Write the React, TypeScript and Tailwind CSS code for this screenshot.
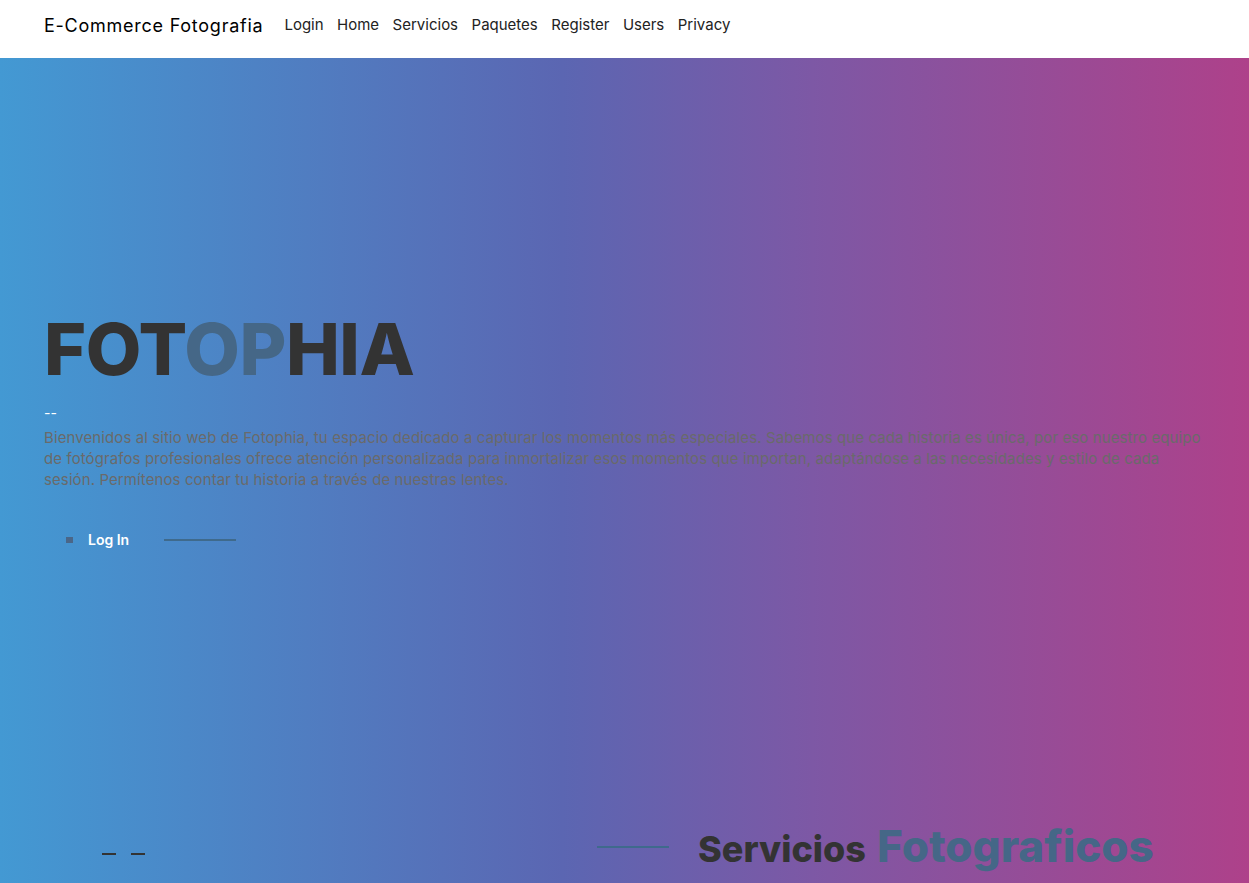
const navLinks = ['Login', 'Home', 'Servicios', 'Paquetes', 'Register', 'Users', 'Privacy'];

const font = { fontFamily: 'Inter, "Open Sans", "Liberation Sans", sans-serif' };

export default function App() {
  return (
    <div style={font} className="min-h-screen bg-white">
      <nav className="flex h-[58px] items-start bg-white px-[44px] pt-[12px]">
        <a className="mr-[21px] text-[18px] tracking-[0.75px] text-black">E-Commerce Fotografia</a>
        <ul className="mt-[2px] flex gap-[13.5px]">
          {navLinks.map((l) => (
            <li key={l} className="text-[15px] text-[#222]">
              {l}
            </li>
          ))}
        </ul>
      </nav>

      <section className="h-[825px] overflow-hidden bg-[linear-gradient(to_right,#4399d3_0%,#5b66b2_45%,#7d58a5_65%,#ae418a_100%)]">
        <div className="px-[44px] pt-[252px]">
          <h1 className="text-[72px] leading-[78px] font-extrabold tracking-[-0.5px] text-[#333]">
            FOT<span className="text-[#456787]">OP</span>HIA
          </h1>
          <div className="mt-[18px] text-[14px] leading-[14px] text-white">--</div>
          <p className="mt-[7px] max-w-[1180px] text-[15px] leading-[21px] tracking-[0.1px] text-[#6a6a6a]">
            Bienvenidos al sitio web de Fotophia, tu espacio dedicado a capturar los momentos más especiales.
            Sabemos que cada historia es única, por eso nuestro equipo de fotógrafos profesionales ofrece atención
            personalizada para inmortalizar esos momentos que importan, adaptándose a las necesidades y estilo de
            cada
            <br />
            sesión. Permítenos contar tu historia a través de nuestras lentes.
          </p>
          <div className="mt-[39px] flex items-center">
            <span className="ml-[22px] h-[6px] w-[7px] bg-[#4a6688]" />
            <span className="ml-[15px] text-[14px] font-semibold text-white">Log In</span>
            <span className="ml-[35px] h-[2px] w-[72px] bg-[#3f6a8c]" />
          </div>
        </div>

        <div className="mt-[263px] flex items-center">
          <div className="mt-[16px] ml-[102px] flex gap-[15px]">
            <span className="h-[2px] w-[14px] bg-[#333]" />
            <span className="h-[2px] w-[14px] bg-[#333]" />
          </div>
          <div className="ml-[452px] flex items-center">
            <span className="mt-[2px] h-[2px] w-[72px] bg-[#3f6a8c]" />
            <h2 className="ml-[29px] flex items-baseline gap-[11px] font-extrabold">
              <span className="text-[36px] text-[#333]">Servicios</span>
              <span className="text-[44px] text-[#456787]">Fotograficos</span>
            </h2>
          </div>
        </div>
      </section>
    </div>
  );
}
